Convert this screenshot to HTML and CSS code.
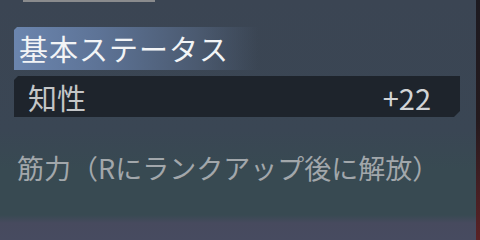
FILE: index.html
```html
<!DOCTYPE html>
<html lang="ja">
<head>
  <meta charset="UTF-8" />
  <meta name="viewport" content="width=device-width, initial-scale=1" />
  <title>基本ステータス</title>
  <link rel="stylesheet" href="styles.css">
</head>
<body>
  <div class="panel">
    <div class="tab-bar"></div>

    <div class="section-title">基本ステータス</div>

    <div class="stat-row">
      <span class="stat-name">知性</span>
      <span class="stat-value">+22</span>
    </div>

    <div class="locked">筋力（Rにランクアップ後に解放）</div>
  </div>
  <div class="edge"></div>
</body>
</html>
```

FILE: styles.css
```css
html, body {
  margin: 0;
  padding: 0;
  height: 100%;
  overflow: hidden;
}

body {
  display: flex;
  width: 480px;
  height: 240px;
  font-family: "Noto Sans CJK JP", "Noto Sans", sans-serif;
}

.panel {
  flex: 1;
  padding-left: 14px;
  padding-right: 16px;
  background: linear-gradient(180deg,
    #3b4553 0,
    #3a4654 130px,
    #384a52 170px,
    #384a52 215px,
    #474a5e 223px,
    #474b60 240px);
}

.tab-bar {
  width: 132px;
  height: 2px;
  margin-left: 9px;
  background: #8a8b8d;
}

.section-title {
  margin-top: 25px;
  height: 43px;
  width: 244px;
  padding-left: 5px;
  box-sizing: border-box;
  line-height: 43px;
  font-size: 29px;
  letter-spacing: 1px;
  color: #f2f4f6;
  white-space: nowrap;
  background: linear-gradient(90deg,
    #6b85ae 0%,
    #5d7396 35%,
    #4b5a70 75%,
    rgba(59, 69, 83, 0) 100%);
  clip-path: polygon(3px 0, 100% 0, 100% 100%, 0 100%, 0 3px);
}

.stat-row {
  display: flex;
  justify-content: space-between;
  align-items: center;
  margin-top: 6px;
  height: 41px;
  padding: 0 29px 0 14px;
  background: #1e242c;
  font-size: 29px;
  clip-path: polygon(4px 0, 100% 0, 100% calc(100% - 6px), calc(100% - 6px) 100%, 0 100%, 0 4px);
}

.stat-name {
  color: #c4c6c8;
}

.stat-value {
  color: #d2d4d6;
}

.locked {
  margin-top: 31px;
  padding-left: 3px;
  line-height: 40px;
  font-size: 27px;
  color: #a2a7ab;
  white-space: nowrap;
}

.edge {
  width: 4px;
  background: linear-gradient(180deg, #1d1a20 0, #241a1e 120px, #4a2024 200px, #5a2226 240px);
}
```
